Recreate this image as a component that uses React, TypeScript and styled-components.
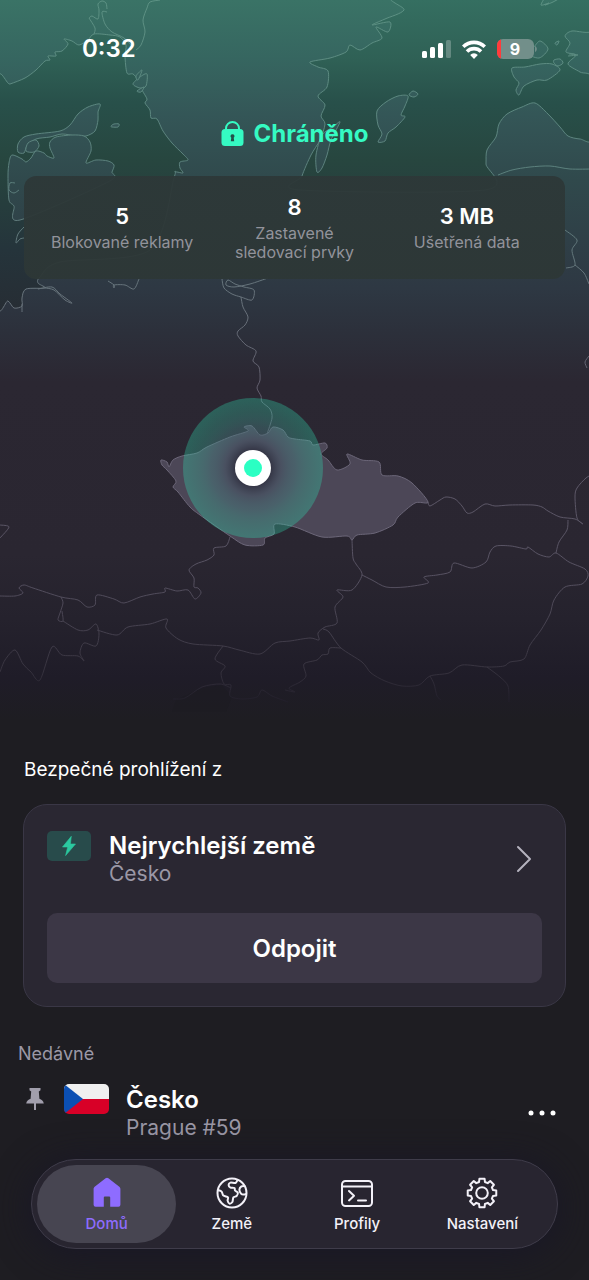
import React from "react";
import styled, { createGlobalStyle } from "styled-components";

const GlobalStyle = createGlobalStyle`
  *, *::before, *::after { box-sizing: border-box; }
  body {
    margin: 0;
    background: #1e1d22;
    color: #fff;
    font-family: Inter, "Noto Sans", sans-serif;
  }
  button { font: inherit; color: inherit; border: 0; padding: 0; background: none; cursor: pointer; }
  h1, h2, p, dl, dd, dt, ul { margin: 0; padding: 0; }
`;

/* ---------- map geometry ---------- */

/** Turns a list of "x,y" points into a softly rounded path. */
function trace(points: string, closed = false): string {
  const p = points.trim().split(/\s+/).map((s) => s.split(",").map(Number));
  const n = p.length;
  const at = (i: number) => (closed ? p[(i + n) % n] : p[Math.max(0, Math.min(n - 1, i))]);
  let d = `M${p[0][0]} ${p[0][1]}`;
  const last = closed ? n : n - 1;
  for (let i = 0; i < last; i++) {
    const [a, b, c, e] = [at(i - 1), at(i), at(i + 1), at(i + 2)];
    const k = 7;
    d += `C${b[0] + (c[0] - a[0]) / k} ${b[1] + (c[1] - a[1]) / k} ${c[0] - (e[0] - b[0]) / k} ${c[1] - (e[1] - b[1]) / k} ${c[0]} ${c[1]}`;
  }
  return closed ? d + "Z" : d;
}

const seas = [
  "-4,88 10,84 25,78 36,70 45,61 50,60 48,56 56,56 55,52 62,51 68,44 64,39 72,41 79,45 88,40 94,34 110,35 120,37 126,45 125,56 127,73 133,74 138,80 142,90 147,99 145,103 150,110 151,118 157,119 163,131 172,143 183,154 188,160 180,162 180,168 183,173 175,172 174,178 150,250 60,262 40,277 38,283 45,288 26,289 22,298 22,306 14,308 8,301 -4,297",
  "400,-6 404,10 385,19 372,25 390,22 388,32 376,27 382,38 372,43 360,50 350,45 346,52 330,58 310,62 318,67 328,71 327,87 318,96 325,105 321,116 325,124 320,140 311,155 302,176 300,190 485,190 486,164 487,150 496,137 499,124 507,114 522,107 535,103 548,114 560,127 568,136 580,139 593,138 593,80 580,72 568,64 576,55 566,52 570,43 565,36 572,31 593,30 593,-6",
];

const islands = [
  "100,104 88,107 78,114 70,125 60,131 36,134 24,137 18,144 18,152 24,153 27,146 36,139 50,137 62,134 76,136 86,136 95,131 98,120 98,112",
  "12,155 22,159 26,162 31,158 36,151 44,153 47,156 54,158 50,148 50,142 56,137 72,135 84,136 90,142 91,151 86,163 96,160 108,161 114,165 112,172 108,182 20,220 14,206 9,200 8,176 9,163",
  "28,143 36,140 39,146 34,152 26,151",
  "111,126 114,124 119,124 118,127 112,127",
  "378,125 377,111 386,102 398,96 408,96 405,106 401,115 405,117 396,127 388,133 385,141 378,142 382,134",
  "409,95 413,91 418,94 414,97",
  "512,68 525,67 540,64 552,64 560,70 547,80 537,80 524,86 519,95 516,90 519,83 514,77",
  "533,48 540,41 548,49 539,58 526,53",
  "555,43 559,41 557,45",
  "554,60 560,59 563,63 558,66 554,63",
  "541,5 549,3 545,5 553,2 562,-4 548,-5",
  "340,122 333,127 322,135 316,155 317,172 322,168 327,155 331,140",
  "133,84 140,77 147,74 146,86 140,88",
  "136,76 142,70 138,80",
  "137,91 144,87 141,92",
];

const borders = [
  "107,12 102,12 105,24 112,32 124,38 133,47",
  "89,18 92,16 98,19 99,10 98,4 102,1 106,3 107,9",
  "94,34 95,28 89,18",
  "160,0 150,2 147,8 143,20 145,32 141,45 136,50",
  "498,175 512,170 530,167 550,166 570,169 593,169",
  "565,230 577,240 572,250 575,265 566,268",
  "575,265 584,273 589,284",
  "569,54 578,55 568,56",
  "15,183 10,183 9,190 14,193 19,190",
  "24,227 18,234 16,243 20,239 24,238",
  "45,288 54,290 65,300 72,303 60,294 52,287 38,289",
  "22,304 22,312",
  "108,281 114,285 114,288 114,285 125,285 134,289 139,279",
  "222,279 224,288 232,294 241,297 252,300 254,290 244,287 235,284 228,280 226,285 234,287 250,284 268,278",
  "241,297 243,307 248,317 245,325 238,331 238,336 246,345 256,351 253,361 259,367 260,380 257,388 261,396 262,402 270,409 272,418 267,434",
  "0,525 9,527 0,538",
  "593,474 586,478 577,488 575,497 577,518 583,524 575,519 560,517 548,511 542,507 533,505 510,505 495,506 485,504 473,512 467,513 462,506 455,499 446,497 440,500 430,506 428,502",
  "568,520 567,530 559,542 556,553",
  "589,356 585,362 587,368",
  "0,596 15,596 23,593 19,588 24,585 33,588 61,597 78,600 87,607 95,605 97,595 114,599 124,603 140,597 153,594 165,592 165,588 177,591 188,590 195,599 201,593 198,588 194,587 194,578 189,570 196,564 207,560 214,555 214,548 226,546 230,537",
  "61,597 63,603 60,613 58,620 63,621 62,611",
  "63,621 78,630 88,630 96,624 99,634 96,646 84,643 80,653 84,661 78,656 62,655 52,647 40,680 31,672 23,664 15,650 5,660 0,672",
  "97,630 117,635 128,627 150,624 167,619 166,628 178,639 193,644 223,646 239,650 260,654 275,643 290,641 310,638 319,640 318,633 325,627 337,623 335,607 343,597 337,590 352,590 362,575 356,564 353,558 352,540",
  "362,575 372,580 386,587 405,587 428,583 424,577 437,575 450,572 454,563 472,568 486,562 490,552 496,546 511,546 526,549 528,547 538,554 549,557 556,553 569,562 585,569 588,576 582,584 565,587 554,600 550,614 541,630 530,645 524,659 510,662 504,666 487,667 462,665 449,673 430,676 419,685 402,686 385,681 371,673 362,662 341,648 329,632 323,629",
  "341,648 330,648 328,654 322,655 317,660 304,664 306,676 300,682 289,688 295,692 285,690",
  "430,676 434,684 437,696 441,700",
  "487,667 500,677 508,686 509,702",
  "223,646 215,659 225,666 221,673 224,684 231,685 230,696 242,699 257,697 262,690 272,696 288,702",
  "173,699 185,698 202,687 220,684 231,688",
];

const czechia =
  "161,460 167,462 169,467 173,460 182,456 197,453 207,447 230,437 248,431 244,427 252,426 260,435 268,433 273,427 283,430 288,437 295,439 310,441 313,445 325,443 327,448 321,454 328,460 337,470 350,464 347,454 362,460 379,462 382,475 398,476 412,483 428,502 415,503 398,517 393,525 375,533 357,535 352,540 347,536 322,537 295,527 275,524 274,534 265,538 263,545 245,545 230,536 200,515 190,507 178,492 173,487 176,481 167,470 162,465";

/* ---------- layout ---------- */

const Screen = styled.div`
  display: flex;
  flex-direction: column;
  min-height: 100vh;
`;

const Hero = styled.header`
  position: relative;
  min-height: 758px;
  padding: 33px 24px 0;
`;

const MapCanvas = styled.svg`
  position: absolute;
  top: 0;
  left: 0;
  z-index: -1;
  width: 100%;
  height: 720px;
`;

const StatusBar = styled.div`
  display: flex;
  align-items: center;
  justify-content: space-between;
  height: 32px;
  padding: 0 28px 0 58px;
`;

const Clock = styled.time`
  font-size: 24px;
  font-weight: 600;
  line-height: 32px;
`;

const Indicators = styled.div`
  display: flex;
  align-items: center;
  gap: 11px;
  svg { display: block; }
`;

const Protection = styled.h1`
  display: flex;
  align-items: center;
  justify-content: center;
  gap: 10px;
  margin-top: 53px;
  color: #35fac3;
  font-size: 24px;
  font-weight: 700;
  line-height: 32px;
`;

const Stats = styled.dl`
  display: grid;
  grid-template-columns: repeat(3, 1fr);
  align-items: center;
  min-height: 103px;
  margin-top: 26px;
  padding: 0 12px;
  border-radius: 12px;
  background: linear-gradient(180deg, #2d3838f2, #2d3736f2);
`;

const Stat = styled.div`
  display: flex;
  flex-direction: column-reverse;
  gap: 4px;
  text-align: center;
`;

const StatValue = styled.dd`
  font-size: 22px;
  font-weight: 600;
  line-height: 26px;
`;

const StatLabel = styled.dt`
  padding: 0 16px;
  color: #92939b;
  font-size: 16px;
  line-height: 19px;
`;

const WideStatLabel = styled(StatLabel)`
  padding: 0;
`;

const Content = styled.main`
  display: flex;
  flex-direction: column;
`;

const SectionTitle = styled.h2`
  padding: 0 24px;
  font-size: 19px;
  font-weight: 400;
  line-height: 24px;
`;

const Card = styled.section`
  display: flex;
  flex-direction: column;
  gap: 24px;
  margin: 22px 23px 0;
  padding: 24px 23px 23px;
  border: 1px solid #3a3746;
  border-radius: 24px;
  background: #2a2732;
`;

const CountryButton = styled.button`
  display: flex;
  align-items: flex-start;
  width: 100%;
  text-align: left;
`;

const FastBadge = styled.span`
  display: grid;
  place-items: center;
  width: 44px;
  height: 30px;
  margin: 2px 18px 0 0;
  border-radius: 5px;
  background: #284b4b;
`;

const Names = styled.span`
  display: flex;
  flex: 1;
  flex-direction: column;
  padding: 2px 0;
`;

const Name = styled.span`
  font-size: 24px;
  font-weight: 600;
  line-height: 30px;
`;

const Place = styled.span`
  color: #9b98a6;
  font-size: 21px;
  line-height: 26px;
`;

const Chevron = styled.svg`
  align-self: center;
  margin-right: 10px;
`;

const DisconnectButton = styled.button`
  height: 70px;
  border-radius: 10px;
  background: #3c3746;
  font-size: 24px;
  font-weight: 600;
`;

const RecentTitle = styled.h2`
  margin-top: 35px;
  padding: 0 18px;
  color: #9b98a6;
  font-size: 18px;
  font-weight: 400;
  line-height: 24px;
`;

const RecentRow = styled.div`
  display: flex;
  align-items: flex-start;
  margin-top: 17px;
  padding: 0 33px 0 26px;
`;

const PinIcon = styled.svg`
  margin: 5px 20px 0 0;
`;

const Flag = styled.svg`
  margin: 1px 17px 0 0;
  border-radius: 5px;
`;

const MoreButton = styled.button`
  align-self: center;
  display: flex;
`;

const TabBar = styled.nav`
  display: grid;
  grid-template-columns: repeat(4, 1fr);
  height: 90px;
  margin: auto 31px 31px;
  padding: 5px 12px;
  border: 1px solid #3f3c4a;
  border-radius: 45px;
  background: #282530;
  box-shadow: 0 4px 36px #191727;
`;

const Tab = styled.a<{ $active?: boolean }>`
  display: flex;
  flex-direction: column;
  align-items: center;
  gap: 6px;
  margin: 0 -7px;
  padding-top: 12px;
  border-radius: 40px;
  background: ${(p) => (p.$active ? "#474551" : "transparent")};
  color: ${(p) => (p.$active ? "#8e6cff" : "#f3f1f8")};
  font-size: 15px;
  font-weight: 500;
  line-height: 18px;
  text-decoration: none;
`;

/* ---------- drawings ---------- */

const CountryMap = () => (
  <MapCanvas viewBox="0 0 589 720" preserveAspectRatio="xMidYMin slice" aria-hidden="true">
    <defs>
      <linearGradient id="land" gradientUnits="userSpaceOnUse" x1="0" y1="0" x2="0" y2="720">
        <stop offset="0" stopColor="#3a7366" />
        <stop offset="0.08" stopColor="#366660" />
        <stop offset="0.16" stopColor="#345657" />
        <stop offset="0.25" stopColor="#30494c" />
        <stop offset="0.4" stopColor="#2e3843" />
        <stop offset="0.46" stopColor="#2c303b" />
        <stop offset="0.53" stopColor="#2b2732" />
        <stop offset="0.77" stopColor="#2a2631" />
        <stop offset="0.86" stopColor="#25222d" />
        <stop offset="0.94" stopColor="#1f1c28" />
        <stop offset="1" stopColor="#1e1d22" />
      </linearGradient>
      <linearGradient id="sea" gradientUnits="userSpaceOnUse" x1="0" y1="0" x2="0" y2="320">
        <stop offset="0" stopColor="#356f61" />
        <stop offset="0.19" stopColor="#2f6055" />
        <stop offset="0.32" stopColor="#28504a" />
        <stop offset="0.5" stopColor="#27463f" />
        <stop offset="0.78" stopColor="#25343b" />
        <stop offset="1" stopColor="#272c33" />
      </linearGradient>
      <linearGradient id="line" gradientUnits="userSpaceOnUse" x1="0" y1="0" x2="0" y2="720">
        <stop offset="0" stopColor="#5d9284" />
        <stop offset="0.25" stopColor="#5b7f7c" />
        <stop offset="0.42" stopColor="#68727b" />
        <stop offset="0.55" stopColor="#625d6d" />
        <stop offset="0.8" stopColor="#575262" />
        <stop offset="0.93" stopColor="#37333f" />
        <stop offset="0.98" stopColor="#1f1c28" />
      </linearGradient>
      <radialGradient id="pulse">
        <stop offset="0" stopColor="#1b1b28" stopOpacity="0.9" />
        <stop offset="0.26" stopColor="#2c3040" stopOpacity="0.7" />
        <stop offset="0.4" stopColor="#475868" stopOpacity="0.55" />
        <stop offset="0.6" stopColor="#468787" stopOpacity="0.4" />
        <stop offset="0.8" stopColor="#38c0a2" stopOpacity="0.32" />
        <stop offset="1" stopColor="#2fdcb0" stopOpacity="0.32" />
      </radialGradient>
    </defs>
    <rect x="-600" width="1800" height="720" fill="url(#land)" />
    <g fill="url(#sea)" stroke="url(#line)">
      {seas.map((s) => <path key={s} d={trace(s, true)} />)}
    </g>
    <g fill="url(#land)" stroke="url(#line)">
      {islands.map((s) => <path key={s} d={trace(s, true)} />)}
    </g>
    <path d="M176 700 202 688 222 685 232 697 226 712 172 712Z" fill="#1c1b20" opacity="0.4" />
    <g fill="none" stroke="url(#line)" strokeLinejoin="round">
      {borders.map((s) => <path key={s} d={trace(s)} />)}
    </g>
    <path d={trace(czechia, true)} fill="#4c4757" stroke="#6c6779" />
    <circle cx="253" cy="468" r="70" fill="url(#pulse)" />
    <circle cx="253" cy="468" r="18" fill="#fff" />
    <circle cx="253" cy="468" r="9" fill="#2bffc3" />
  </MapCanvas>
);

const SignalIcon = () => (
  <svg width="29" height="18" viewBox="0 0 29 18" fill="#fff" role="img" aria-label="Signál">
    <rect x="0" y="11" width="5" height="7" rx="1.5" />
    <rect x="8" y="7" width="5" height="11" rx="1.5" />
    <rect x="16" y="3" width="5" height="15" rx="1.5" />
    <rect x="24" y="0" width="5" height="18" rx="1.5" opacity="0.25" />
  </svg>
);

const WifiIcon = () => (
  <svg width="24" height="19" viewBox="0 0 24 19" fill="none" stroke="#fff" strokeWidth="3.6" role="img" aria-label="Wi-Fi">
    <path d="M1.2 6.8a15.4 15.4 0 0 1 21.6 0" />
    <path d="M5 11.500a10 10 0 0 1 14 0" />
    <path d="M12 19 8.2 14.9a5.4 5.4 0 0 1 7.6 0Z" fill="#fff" stroke="none" />
  </svg>
);

const BatteryIcon = () => (
  <svg width="40" height="20" viewBox="0 0 40 20" role="img" aria-label="Baterie 9 %">
    <clipPath id="cell"><rect width="37" height="20" rx="6" /></clipPath>
    <g clipPath="url(#cell)">
      <rect width="37" height="20" fill="#728f8a" />
      <rect width="4" height="20" fill="#ff3b3b" />
    </g>
    <path d="M38 7c2.400 1 2.400 5 0 6Z" fill="#728f8a" />
    <text x="18" y="16" textAnchor="middle" fill="#fff" fontSize="16" fontWeight="700">9</text>
  </svg>
);

const LockIcon = () => (
  <svg width="23" height="26" viewBox="0 0 23 26" aria-hidden="true">
    <path d="M5 9V7.500a6.500 6.500 0 0 1 13 0V9" fill="none" stroke="#35fac3" strokeWidth="2" />
    <rect x="0.500" y="8" width="22" height="17" rx="3.500" fill="#35fac3" />
    <path d="M11.500 13.200a2 2 0 0 1 1.200 3.600l.5 3.400h-3.400l.5-3.400a2 2 0 0 1 1.200-3.600Z" fill="#23504a" />
  </svg>
);

const BoltIcon = () => (
  <svg width="14" height="20" viewBox="0 0 14 20" fill="#2bc9a0" aria-hidden="true">
    <path d="M9.300 0.300 0.500 11h5.200L3.600 19.600 13.500 8H8.400Z" stroke="#2bc9a0" strokeWidth="0.600" strokeLinejoin="round" />
  </svg>
);

const HomeIcon = () => (
  <svg width="32" height="32" viewBox="0 0 32 32" fill="currentColor" aria-hidden="true">
    <path d="M14.600 1.300a2.200 2.200 0 0 1 2.800 0L28 9.400c.9.700 1.400 1.500 1.400 2.700V27.800a2 2 0 0 1-2 2H19.200V20.500a1 1 0 0 0-1-1h-4.400a1 1 0 0 0-1 1v9.300H4.600a2 2 0 0 1-2-2V12.100c0-1.200.5-2 1.400-2.700Z" />
  </svg>
);

const GlobeIcon = () => (
  <svg width="32" height="32" viewBox="0 0 32 32" fill="none" stroke="currentColor" strokeWidth="2" strokeLinejoin="round" strokeLinecap="round" aria-hidden="true">
    <circle cx="16" cy="16" r="14.500" />
    <path d={trace("21.5,3 19.5,6 14.5,5.6 12.6,8 14.5,10.6 18.5,11 19,13.5 21.8,15.6 20.6,19 17.4,20.4 16.4,25 13.4,26.6 11.6,23.6 12,20.4 7.4,18.6 5.6,14.6 2,13")} />
    <path d={trace("28.6,9 25.4,9.4 23.4,12.6 25,16.6 27.6,17.6 30,17")} />
  </svg>
);

const ProfilesIcon = () => (
  <svg width="32" height="32" viewBox="0 0 32 32" fill="none" stroke="currentColor" strokeWidth="2" strokeLinecap="round" strokeLinejoin="round" aria-hidden="true">
    <rect x="1" y="4" width="30" height="25" rx="3.500" />
    <path d="M1 9.500h30M8 14l5 4.700-5 4.700M17 23.400h8" />
  </svg>
);

const gear = (() => {
  const out: string[] = [];
  for (let i = 0; i < 8; i++) {
    const base = (i * Math.PI) / 4 - Math.PI / 2;
    for (const [r, o] of [[11.4, -0.26], [14.5, -0.18], [14.5, 0.18], [11.4, 0.26]]) {
      out.push(`${(16 + r * Math.cos(base + o)).toFixed(2)} ${(16 + r * Math.sin(base + o)).toFixed(2)}`);
    }
  }
  return `M${out.join("L")}Z`;
})();

const SettingsIcon = () => (
  <svg width="32" height="32" viewBox="0 0 32 32" fill="none" stroke="currentColor" strokeWidth="2" strokeLinejoin="round" aria-hidden="true">
    <path d={gear} />
    <circle cx="16" cy="16" r="5.800" />
  </svg>
);

const tabs = [
  { label: "Domů", icon: <HomeIcon />, active: true },
  { label: "Země", icon: <GlobeIcon /> },
  { label: "Profily", icon: <ProfilesIcon /> },
  { label: "Nastavení", icon: <SettingsIcon /> },
];

export default function App() {
  return (
    <>
      <GlobalStyle />
      <Screen>
        <Hero>
          <CountryMap />
          <StatusBar>
            <Clock>0:32</Clock>
            <Indicators>
              <SignalIcon />
              <WifiIcon />
              <BatteryIcon />
            </Indicators>
          </StatusBar>
          <Protection><LockIcon />Chráněno</Protection>
          <Stats>
            <Stat>
              <WideStatLabel>Blokované reklamy</WideStatLabel>
              <StatValue>5</StatValue>
            </Stat>
            <Stat>
              <StatLabel>Zastavené sledovací prvky</StatLabel>
              <StatValue>8</StatValue>
            </Stat>
            <Stat>
              <WideStatLabel>Ušetřená data</WideStatLabel>
              <StatValue>3 MB</StatValue>
            </Stat>
          </Stats>
        </Hero>
        <Content>
          <SectionTitle>Bezpečné prohlížení z</SectionTitle>
          <Card>
            <CountryButton type="button">
              <FastBadge><BoltIcon /></FastBadge>
              <Names>
                <Name>Nejrychlejší země</Name>
                <Place>Česko</Place>
              </Names>
              <Chevron width="16" height="28" viewBox="0 0 16 28" fill="none" stroke="#b5b2be" strokeWidth="2" strokeLinecap="round" strokeLinejoin="round" aria-hidden="true">
                <path d="M2 2l12 12L2 26" />
              </Chevron>
            </CountryButton>
            <DisconnectButton type="button">Odpojit</DisconnectButton>
          </Card>
          <RecentTitle>Nedávné</RecentTitle>
          <RecentRow>
            <PinIcon width="18" height="22" viewBox="0 0 18 22" fill="#a19eac" aria-hidden="true">
              <path d="M3.500 0h11v2.200l-1.700 1.300.6 7.200c2.300.8 4 2.300 4.400 4.800H.2c.4-2.500 2.100-4 4.400-4.800l.6-7.200-1.700-1.300Z" />
              <path d="M8 15h2v7H8z" />
            </PinIcon>
            <Flag width="45" height="30" viewBox="0 0 45 30" role="img" aria-label="Česká vlajka">
              <path d="M0 0h45v15H0z" fill="#f0f0f0" />
              <path d="M0 15h45v15H0z" fill="#d80027" />
              <path d="M0 0 19 15 0 30Z" fill="#0b4fb3" />
            </Flag>
            <Names>
              <Name>Česko</Name>
              <Place>Prague #59</Place>
            </Names>
            <MoreButton type="button" aria-label="Další možnosti">
              <svg width="28" height="6" viewBox="0 0 28 6" fill="#fff" aria-hidden="true">
                <circle cx="3" cy="3" r="2.500" />
                <circle cx="14" cy="3" r="2.500" />
                <circle cx="25" cy="3" r="2.500" />
              </svg>
            </MoreButton>
          </RecentRow>
        </Content>
        <TabBar>
          {tabs.map((t) => (
            <Tab key={t.label} href="#" $active={t.active} aria-current={t.active ? "page" : undefined}>
              {t.icon}
              {t.label}
            </Tab>
          ))}
        </TabBar>
      </Screen>
    </>
  );
}
